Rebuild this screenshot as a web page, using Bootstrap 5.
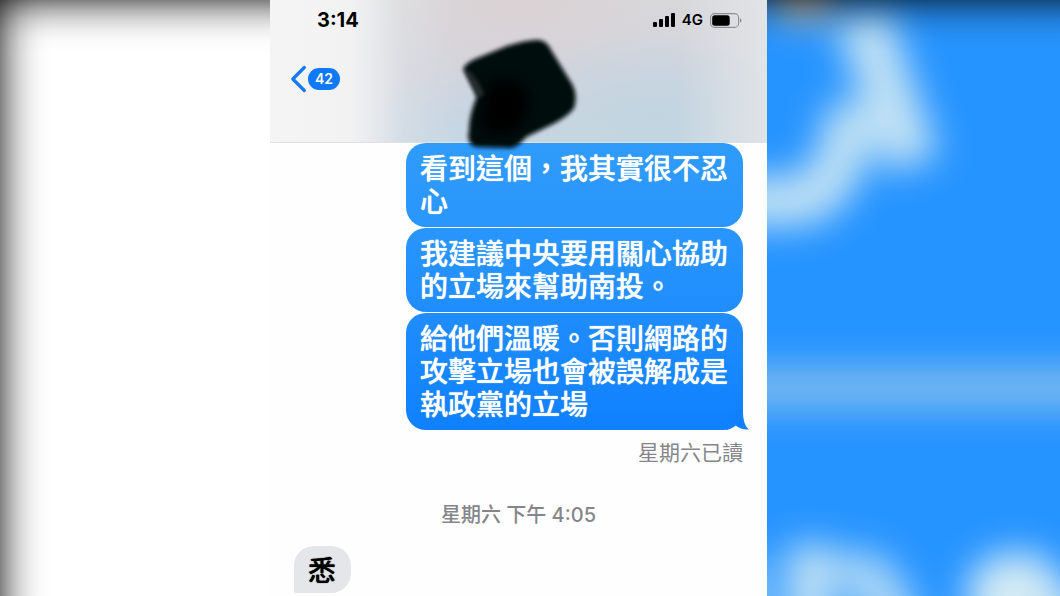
<!DOCTYPE html>
<html lang="zh-Hant">
<head>
<meta charset="utf-8">
<meta name="viewport" content="width=device-width, initial-scale=1">
<title>訊息</title>
<link href="https://cdn.jsdelivr.net/npm/bootstrap@5.3.0/dist/css/bootstrap.min.css" rel="stylesheet">
<style>
  body { font-family: Inter, "Noto Sans CJK TC", sans-serif; background: #fff; }
  .stage {
    --fade: rgba(0,0,0,.5), rgba(0,0,0,.31) 10px, rgba(0,0,0,.16) 20px, rgba(0,0,0,.07) 30px, rgba(0,0,0,.02) 40px, rgba(0,0,0,0) 52px;
  }
  .side-left { flex: 270 1 0; background: linear-gradient(to right, var(--fade)), linear-gradient(to bottom, var(--fade)), #fff; }
  .phone { flex: 497 1 0; min-width: 0; background: #fefefe; }
  .side-right { flex: 293 1 0; background: #2694ff; }
  .side-right svg { width: 100%; height: 100%; }
  .side-right::after { content: ""; position: absolute; inset: 0; background: linear-gradient(to bottom, var(--fade)); }

  .chat-head {
    padding-bottom: 24px;
    border-bottom: 1px solid #dde1e3;
    background:
      linear-gradient(to right, #f4f4f5 0, #f2f2f3 16%, rgba(238,239,241,.85) 20%, rgba(228,230,233,.4) 27%, rgba(225,227,230,0) 38%),
      linear-gradient(to right, rgba(226,228,231,0) 82%, rgba(226,229,232,.9) 100%),
      radial-gradient(ellipse 34% 60% at 78% 82%, #c1d5e1 0, rgba(193,213,225,0) 100%),
      radial-gradient(ellipse 24% 50% at 38% 100%, #c5d6e4 0, rgba(197,214,228,0) 100%),
      radial-gradient(ellipse 30% 60% at 50% 0, #dad1d4 0, rgba(218,209,212,0) 100%),
      linear-gradient(to bottom, #d8d8da 0, #d3d4dd 50%, #c8d6df 100%);
  }
  .status { height: 40px; padding: 0 25px 0 47px; color: #000; }
  .clock { font-size: 20px; line-height: 24px; font-weight: 700; }
  .network { font-size: 15px; line-height: 20px; font-weight: 600; padding: 0 7px 0 6px; }
  .nav-row { height: 78px; padding-left: 20px; }
  .unread { height: 22px; padding: 0 7px; font-size: 14px; line-height: 22px; font-weight: 600; background: #0f79f8; }
  .scribble { left: 50%; top: 30px; margin-left: -68px; }

  .bubble { font-size: 28px; line-height: 33px; font-weight: 500; border-radius: 20px; text-shadow: 0 0 1px currentColor; }
  .sent { max-width: calc(68% - 1px); padding: 10px 14px 8px; color: #fff; margin-right: 24px; }
  .sent-1 { background: linear-gradient(#2f9bfa, #2996fd); }
  .sent-2 { background: linear-gradient(#2996fd, #1f8dfd); }
  .sent-3 { background: linear-gradient(#1f8dfd, #0f81ff); }
  .tail { right: -6px; bottom: 0; }
  .received { padding: 9px 15px 5px 14px; margin-left: 24px; color: #000; background: #e5e6e9; border-bottom-left-radius: 2px; }
  .note { font-size: 21px; line-height: 22px; color: #85868a; }
  .read-note { margin: 12px 24px 0 0; }
  .date-note { margin: 40px 0 20px; font-size: 20px; font-weight: 500; }
</style>
</head>
<body>
<div class="stage d-flex min-vh-100 overflow-hidden">
  <div class="side-left" aria-hidden="true"></div>

  <main class="phone d-flex flex-column">
    <header class="chat-head position-relative">
      <div class="status d-flex align-items-center justify-content-between">
        <span class="clock">3:14</span>
        <div class="d-flex align-items-center">
          <svg width="23" height="14" viewBox="0 0 23 14" aria-hidden="true">
            <rect x="0" y="9" width="4" height="5" rx="1"/><rect x="6" y="6" width="4" height="8" rx="1"/><rect x="12" y="3" width="4" height="11" rx="1"/><rect x="18" y="0" width="4" height="14" rx="1"/>
          </svg>
          <span class="network">4G</span>
          <svg width="32" height="15" viewBox="0 0 32 15" aria-hidden="true">
            <rect x=".6" y=".6" width="28" height="13.800" rx="4" fill="none" stroke="#8d8e91" stroke-width="1.100"/>
            <rect x="2.200" y="2.200" width="17.500" height="10.600" rx="2.500"/>
            <path d="M30 5.300q1.500.7 1.500 2.200t-1.500 2.200z" fill="#8d8e91"/>
          </svg>
        </div>
      </div>
      <nav class="nav-row d-flex align-items-center">
        <a href="#" class="d-flex align-items-center text-decoration-none" aria-label="返回">
          <svg width="18" height="28" viewBox="0 0 18 28" aria-hidden="true"><path d="M14.300 2.500 2.800 14l11.500 11.500" fill="none" stroke="#1479f2" stroke-width="3.200" stroke-linecap="round" stroke-linejoin="round"/></svg>
          <span class="unread rounded-pill text-white">42</span>
        </a>
      </nav>
      <svg class="scribble position-absolute" width="140" height="126" viewBox="0 0 140 126" aria-hidden="true">
        <defs>
          <filter id="soft" x="-10%" y="-10%" width="120%" height="120%"><feGaussianBlur stdDeviation="2.200"/></filter>
          <filter id="softer" x="-40%" y="-30%" width="180%" height="160%"><feGaussianBlur stdDeviation="7"/></filter>
        </defs>
        <path filter="url(#soft)" d="M12 39Q15 33 24 29L56 16Q78 9 88 10Q96 11 100 20L121 54Q127 65 123 78Q118 86 100 95L75 107Q67 117 60 118L25 117Q15 114 18 101Q18 85 26 67Z" fill="#06070b"/>
        <path filter="url(#softer)" d="M40 50Q70 46 78 64Q80 84 62 104L32 104Q28 80 40 50Z" fill="#000"/>
        <path filter="url(#soft)" d="M14 40Q22 40 33 64L28 68Z" fill="#3a3c42" opacity=".7"/>
      </svg>
    </header>

    <section class="d-flex flex-column align-items-end" style="gap:1px">
      <div class="bubble sent sent-1">看到這個，我其實很不忍心</div>
      <div class="bubble sent sent-2">我建議中央要用關心協助的立場來幫助南投。</div>
      <div class="bubble sent sent-3 position-relative">給他們溫暖。否則網路的攻擊立場也會被誤解成是執政黨的立場
        <svg class="tail position-absolute" width="22" height="22" viewBox="0 0 22 22" aria-hidden="true"><path d="M16 0Q15.500 17 22 21.500Q14 22 8 17Q4 21 0 22L0 8Z" fill="#0f81ff"/></svg>
      </div>
    </section>
    <p class="note read-note text-end">星期六已讀</p>
    <p class="note date-note text-center">星期六 下午 4:05</p>
    <div class="bubble received align-self-start">悉</div>
  </main>

  <div class="side-right position-relative overflow-hidden" aria-hidden="true">
    <svg class="position-absolute" viewBox="0 0 293 596" preserveAspectRatio="xMinYMin slice">
      <defs><filter id="haze" filterUnits="userSpaceOnUse" x="-90" y="-80" width="480" height="780" color-interpolation-filters="sRGB"><feGaussianBlur stdDeviation="18"/></filter></defs>
      <g filter="url(#haze)" fill="none" stroke="#c3e2f4" stroke-width="48">
        <path d="M94 14L146 164" stroke-width="54"/>
        <path d="M-70 201H25Q74 200 86 105" stroke-width="50"/>
        <path d="M10 -60H64V20H10Z" fill="#c9c3b4" stroke="none"/>
        <path d="M-100 388H390" stroke="#7cbaee" stroke-width="42"/>
        <path d="M42 545V690" stroke-width="44"/>
        <path d="M70 582Q126 550 136 690" stroke-width="50" opacity=".85"/>
        <path d="M-30 560V690" opacity=".8"/>
        <ellipse cx="249" cy="596" rx="50" ry="44" fill="#d6ebf4" stroke="none"/>
        <path d="M290 590V670"/>
      </g>
    </svg>
  </div>
</div>
<script src="https://cdn.jsdelivr.net/npm/bootstrap@5.3.0/dist/js/bootstrap.bundle.min.js"></script>
</body>
</html>
